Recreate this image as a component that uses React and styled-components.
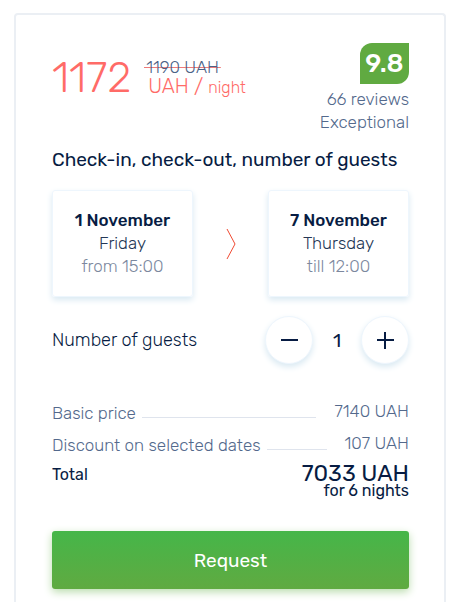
import React, { useState } from "react";
import styled, { createGlobalStyle } from "styled-components";

const prices = [
  { label: "Basic price", value: "7140 UAH" },
  { label: "Discount on selected dates", value: "107 UAH" },
];

const App = () => {
  const [guests, setGuests] = useState(1);

  return (
    <>
      <GlobalStyle />
      <Page>
        <Card>
          <Header>
            <Price>
              <Amount>1172</Amount>
              <PriceInfo>
                <OldPrice>1190 UAH</OldPrice>
                <Currency>
                  UAH / <small>night</small>
                </Currency>
              </PriceInfo>
            </Price>
            <Rating>
              <Score>9.8</Score>
              <div>66 reviews</div>
              <div>Exceptional</div>
            </Rating>
          </Header>

          <Title>Check-in, check-out, number of guests</Title>

          <Dates>
            <DateCard>
              <Day>1 November</Day>
              <div>Friday</div>
              <Time>from 15:00</Time>
            </DateCard>
            <Arrow viewBox="0 0 10 32" aria-hidden="true">
              <path d="M1 1L9 16L1 31" />
            </Arrow>
            <DateCard>
              <Day>7 November</Day>
              <div>Thursday</div>
              <Time>till 12:00</Time>
            </DateCard>
          </Dates>

          <Guests>
            <span id="guests">Number of guests</span>
            <Counter role="group" aria-labelledby="guests">
              <RoundButton
                type="button"
                aria-label="Fewer guests"
                onClick={() => setGuests(Math.max(1, guests - 1))}
              >
                <svg viewBox="0 0 18 18" aria-hidden="true">
                  <path d="M1 9H18" />
                </svg>
              </RoundButton>
              <Count>{guests}</Count>
              <RoundButton
                type="button"
                aria-label="More guests"
                onClick={() => setGuests(guests + 1)}
              >
                <svg viewBox="0 0 18 18" aria-hidden="true">
                  <path d="M1 9H18M9 1V18" />
                </svg>
              </RoundButton>
            </Counter>
          </Guests>

          <Prices>
            {prices.map(({ label, value }) => (
              <PriceRow key={label}>
                <PriceLabel>{label}</PriceLabel>
                <Line />
                <PriceValue>{value}</PriceValue>
              </PriceRow>
            ))}
          </Prices>

          <Total>
            <span>Total</span>
            <TotalPrice>
              <TotalAmount>7033 UAH</TotalAmount>
              <div>for 6 nights</div>
            </TotalPrice>
          </Total>

          <RequestButton type="button">Request</RequestButton>
        </Card>
      </Page>
    </>
  );
};

export default App;

const GlobalStyle = createGlobalStyle`
  * {
    box-sizing: border-box;
  }

  body {
    margin: 0;
    background: #fff;
    color: #071c43;
    font-family: Rubik, Roboto, "Liberation Sans", sans-serif;
    font-size: 17px;
    line-height: 23px;
  }

  button {
    font: inherit;
    border: 0;
    cursor: pointer;
  }
`;

const Page = styled.main`
  display: flex;
  min-height: 100vh;
  padding: 13px 10px 0 14px;
`;

const Card = styled.section`
  flex: 1;
  padding: 28px 35px 13px 36px;
  border: 2px solid #ebeff4;
  border-bottom: 0;
  border-radius: 4px 4px 0 0;
`;

const Header = styled.header`
  display: flex;
  justify-content: space-between;
`;

const Price = styled.div`
  display: flex;
  gap: 13px;
  padding-top: 14px;
  color: #ff6b67;
  font-weight: 300;
`;

const Amount = styled.div`
  font-size: 43px;
  line-height: 42px;
`;

const PriceInfo = styled.div`
  line-height: 20px;
`;

const OldPrice = styled.div`
  width: max-content;
  padding: 0 2px;
  color: #4b6286;
  background: linear-gradient(#ee7c7b, #ee7c7b) center / 100% 1px no-repeat;
`;

const Currency = styled.div`
  font-size: 20px;
  line-height: 18px;
  padding-left: 4px;

  small {
    font-size: 16px;
  }
`;

const Rating = styled.div`
  color: #53698c;
  font-weight: 300;
  text-align: right;
`;

const Score = styled.div`
  width: 49px;
  margin: 0 0 4px auto;
  border-radius: 12px 0;
  background: #60aa41;
  color: #fff;
  font-size: 26px;
  font-weight: 500;
  line-height: 41px;
  text-align: center;
`;

const Title = styled.h2`
  margin: 14px 0 18px;
  font-size: 19px;
  font-weight: 400;
  line-height: 24px;
`;

const Dates = styled.div`
  display: flex;
  align-items: center;
  justify-content: space-between;
`;

const DateCard = styled.div`
  flex: 0 0 141px;
  padding: 18px 0;
  border: 1px solid #eef6fd;
  border-radius: 3px;
  box-shadow: 0 3px 6px #d9e9f2;
  color: #243756;
  font-weight: 300;
  text-align: center;
`;

const Day = styled.div`
  color: #071c43;
  font-weight: 500;
`;

const Time = styled.div`
  color: #7c889e;
`;

const Arrow = styled.svg`
  width: 10px;
  height: 32px;
  fill: none;
  stroke: #f04a32;
`;

const Guests = styled.div`
  display: flex;
  align-items: center;
  justify-content: space-between;
  margin-top: 19px;
  font-size: 18px;
  font-weight: 300;
`;

const Counter = styled.div`
  display: flex;
  align-items: center;
`;

const RoundButton = styled.button`
  display: flex;
  align-items: center;
  justify-content: center;
  width: 48px;
  height: 48px;
  padding: 0;
  border: 1px solid #eef6fd;
  border-radius: 50%;
  background: #fff;
  box-shadow: 0 3px 6px #d9e9f2;

  svg {
    width: 18px;
    height: 18px;
    fill: none;
    stroke: #071c43;
    stroke-width: 2;
  }
`;

const Count = styled.output`
  width: 48px;
  font-size: 19px;
  font-weight: 400;
  text-align: center;
`;

const Prices = styled.div`
  display: grid;
  gap: 7px;
  margin-top: 36px;
  color: #53698c;
  font-weight: 300;
`;

const PriceRow = styled.div`
  display: flex;
  height: 25px;
`;

const PriceLabel = styled.span`
  align-self: flex-end;
`;

const Line = styled.span`
  flex: 1;
  height: 1px;
  margin: 17px 18px 0 6px;
  background: #dfe4ed;
`;

const PriceValue = styled.span`
  align-self: flex-start;
`;

const Total = styled.div`
  display: flex;
  justify-content: space-between;
  margin-top: 6px;
  font-size: 16px;
`;

const TotalPrice = styled.div`
  line-height: 16px;
  text-align: right;
`;

const TotalAmount = styled.div`
  font-size: 23px;
  line-height: 20px;
`;

const RequestButton = styled.button`
  width: 100%;
  height: 58px;
  margin-top: 32px;
  border-radius: 3px;
  background: linear-gradient(#45b649, #60aa41);
  box-shadow: 0 3px 8px #b9dcac;
  color: #fff;
  font-size: 19px;
`;
